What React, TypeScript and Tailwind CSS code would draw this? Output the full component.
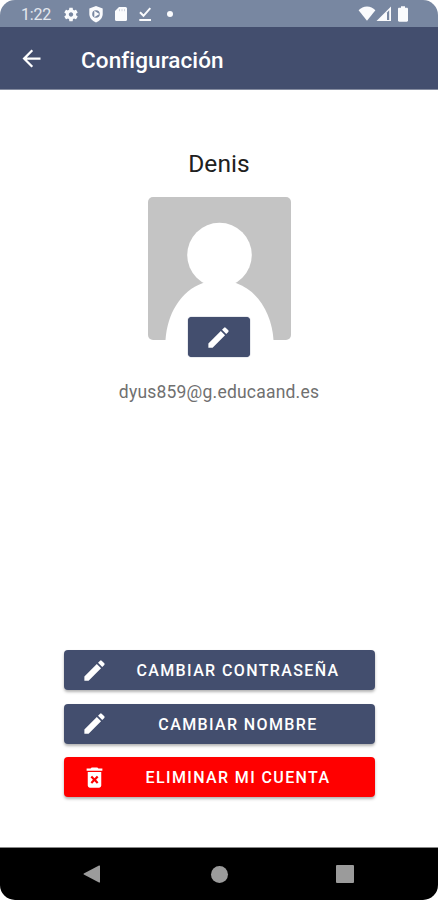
import React from "react";

const EDIT =
  "M3 17.25V21h3.75L17.81 9.94l-3.75-3.75L3 17.25zM20.71 7.04c.39-.39.39-1.02 0-1.41l-2.34-2.34a.9959.9959 0 0 0-1.41 0l-1.83 1.83 3.75 3.75 1.83-1.83z";
const DELETE =
  "M6 19c0 1.1.9 2 2 2h8c1.1 0 2-.9 2-2V7H6v12zm2.46-7.12l1.41-1.41L12 12.59l2.12-2.12 1.41 1.41L13.41 14l2.12 2.12-1.41 1.41L12 15.41l-2.12 2.12-1.41-1.41L10.59 14l-2.13-2.12zM15.5 4l-1-1h-5l-1 1H5v2h14V4z";
const GEAR =
  "M19.14 12.94c.04-.3.06-.61.06-.94 0-.32-.02-.64-.07-.94l2.03-1.58c.18-.14.23-.41.12-.61l-1.92-3.32c-.12-.22-.37-.29-.59-.22l-2.39.96c-.5-.38-1.03-.7-1.62-.94l-.36-2.54c-.04-.24-.24-.41-.48-.41h-3.84c-.24 0-.43.17-.47.41l-.36 2.54c-.59.24-1.13.57-1.62.94l-2.39-.96c-.22-.08-.47 0-.59.22L2.74 8.87c-.12.21-.08.47.12.61l2.03 1.58c-.05.3-.09.63-.09.94s.02.64.07.94l-2.03 1.58c-.18.14-.23.41-.12.61l1.92 3.32c.12.22.37.29.59.22l2.39-.96c.5.38 1.03.7 1.62.94l.36 2.54c.05.24.24.41.48.41h3.84c.24 0 .44-.17.47-.41l.36-2.54c.59-.24 1.13-.56 1.62-.94l2.39.96c.22.08.47 0 .59-.22l1.92-3.32c.12-.22.07-.47-.12-.61l-2.01-1.58zM12 15.1c-1.7 0-3.1-1.4-3.1-3.1s1.4-3.1 3.1-3.1 3.1 1.4 3.1 3.1-1.4 3.1-3.1 3.1z";

function Icon({ d, className }: { d: string; className: string }) {
  return (
    <svg viewBox="0 0 24 24" fill="currentColor" className={className}>
      <path fillRule="evenodd" d={d} />
    </svg>
  );
}

function StatusBar() {
  return (
    <div className="flex h-[27px] shrink-0 items-start bg-[#7887a1] pl-[21px] pr-[29px] pt-[6px] text-[#fafbfd]">
      <span className="w-[41px] text-[16px] leading-[17px] tracking-[-0.2px] text-[#e4e8ef]">1:22</span>
      <Icon d={GEAR} className="h-[17px] w-[18px]" />
      <svg viewBox="0 0 14 17" className="ml-[9px] h-[17px] w-[14px]">
        <path fill="currentColor" d="M7 0l6.7 2.6v5.2c0 4-2.7 7.3-6.7 8.6C3 15.1.3 11.8.3 7.8V2.6z" />
        <circle cx="7" cy="8" r="3.8" fill="#7887a1" />
        <path fill="currentColor" d="M5.3 4.800L10.400 8L5.300 11.200z" />
      </svg>
      <svg viewBox="0 0 14 16" className="ml-[11px] h-4 w-[14px]">
        <path
          fill="currentColor"
          d="M5 1h6.5A1.5 1.5 0 0 1 13 2.500v11a1.5 1.5 0 0 1-1.500 1.500h-9A1.5 1.5 0 0 1 1 13.500V5z"
        />
        <path stroke="#7887a1" strokeOpacity="0.35" strokeWidth="1" d="M5.500 3.200v2M8 3.200v2M10.500 3.200v2" />
      </svg>
      <svg viewBox="0 0 14 16" fill="none" stroke="currentColor" strokeWidth="2" className="ml-[10px] h-4 w-[14px]">
        <path d="M2 6.200l3.500 3.600L12.300 2.200M1.300 14H13" />
      </svg>
      <span className="ml-[15px] mt-[5px] h-[6px] w-[6px] rounded-full bg-current" />
      <svg viewBox="0 0 18 16" className="ml-auto h-4 w-[18px]">
        <path fill="currentColor" d="M9 14.700L.6 4.300C2.800 2 5.800.6 9 .6s6.200 1.400 8.400 3.700z" />
      </svg>
      <svg viewBox="0 0 16 16" className="h-4 w-4">
        <path fill="currentColor" d="M.5 15L15 .5V15z" />
        <path fill="#7887a1" d="M11 6.500V14h2.200V4.300z" />
      </svg>
      <svg viewBox="0 0 12 16" className="ml-[5px] h-4 w-[12px]">
        <path
          fill="currentColor"
          d="M4 .3h4v1.500h1.800c.7 0 1.200.5 1.200 1.200v11.500c0 .7-.5 1.200-1.200 1.200H2.200c-.7 0-1.200-.5-1.200-1.200V3c0-.7.5-1.200 1.200-1.200H4z"
        />
      </svg>
    </div>
  );
}

function ActionButton({ icon, label, danger = false }: { icon: string; label: string; danger?: boolean }) {
  return (
    <button
      className={`flex h-10 w-full items-center rounded-[4px] pl-[17px] pr-[7px] text-white shadow-[0_2px_3px_rgba(0,0,0,0.3)] ${
        danger ? "bg-[#ff0000]" : "bg-[#434e6e]"
      }`}
    >
      <Icon d={icon} className="h-[27px] w-[27px] shrink-0" />
      <span className="mt-[2px] flex-1 whitespace-nowrap text-center text-[16px] font-medium leading-5 tracking-[1.38px]">
        {label}
      </span>
    </button>
  );
}

export default function App() {
  return (
    <div className="h-[900px] w-[438px] bg-white">
      <div className="flex h-full flex-col overflow-hidden rounded-[15px] bg-white font-[Roboto,sans-serif]">
        <StatusBar />
        <header className="flex h-[63px] shrink-0 items-center border-b border-[#858ca0] bg-[#434e6e] pl-[18px] text-white">
          <Icon d="M20 11H7.830l5.590-5.590L12 4l-8 8 8 8 1.410-1.410L7.830 13H20v-2z" className="h-[27px] w-[27px]" />
          <h1 className="ml-[36px] mt-[3px] text-[22.5px] font-medium leading-7 tracking-[0.1px]">Configuración</h1>
        </header>

        <main className="flex flex-1 flex-col items-center">
          <h2 className="mt-[59px] text-[24.5px] leading-[30px] tracking-[0.1px] text-[#202020]">Denis</h2>
          <div className="mt-[18px] flex flex-col items-center">
            <svg viewBox="0 0 143 143" className="h-[143px] w-[143px] rounded-[5px] bg-[#c4c4c4]">
              <circle cx="71.500" cy="58" r="32.300" fill="white" />
              <path fill="white" d="M17.500 143C19 118 32 94 55 86h33c23 8 36 32 37.500 57z" />
            </svg>
            <button className="-mt-[23px] mr-px flex h-[40px] w-[62px] items-center justify-center rounded-[4px] bg-[#434e6e] text-white shadow-[0_0_1px_#223260]">
              <Icon d={EDIT} className="h-[27px] w-[27px]" />
            </button>
          </div>
          <p className="mt-[23px] text-[17.5px] leading-6 tracking-[0.21px] text-[#707070]">dyus859@g.educaand.es</p>
          <div className="mb-[50px] ml-px mt-auto flex w-[311px] flex-col gap-[13.5px]">
            <ActionButton icon={EDIT} label="CAMBIAR CONTRASEÑA" />
            <ActionButton icon={EDIT} label="CAMBIAR NOMBRE" />
            <ActionButton icon={DELETE} label="ELIMINAR MI CUENTA" danger />
          </div>
        </main>

        <nav className="flex h-[53px] shrink-0 items-center border-t border-[#888] bg-black pl-[83px] text-[#9b9b9b]">
          <svg viewBox="0 0 18 18" className="h-[18px] w-[18px]">
            <path fill="currentColor" d="M16 .5c.6-.3 1 0 1 .5v16c0 .5-.4.800-1 .5L.8 9.500c-.5-.3-.5-.7 0-1z" />
          </svg>
          <span className="ml-[110px] h-[17px] w-[17px] rounded-full bg-current" />
          <span className="ml-[108px] h-[18px] w-[18px] rounded-[1px] bg-current" />
        </nav>
      </div>
    </div>
  );
}
